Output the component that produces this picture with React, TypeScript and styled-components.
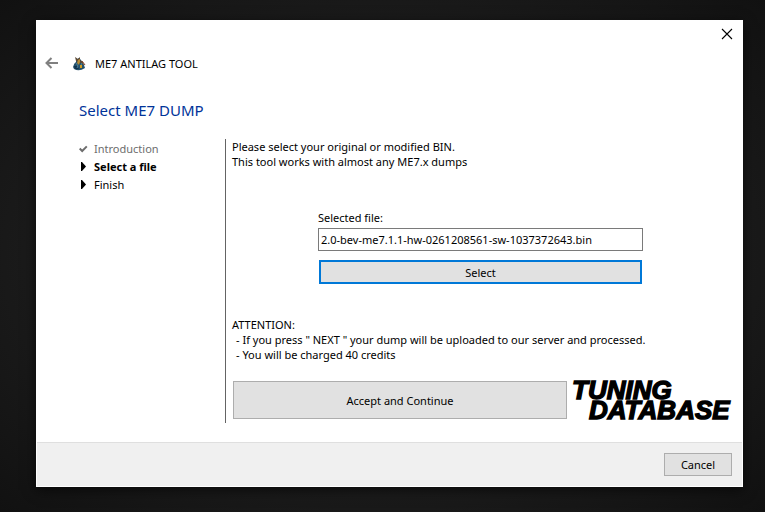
import React, { useState } from "react";
import styled, { createGlobalStyle } from "styled-components";

const GlobalStyle = createGlobalStyle`
  * { box-sizing: border-box; }
  body {
    margin: 0;
    background: #151515;
    color: #000;
    font: 11px/15px "Noto Sans", "Open Sans", sans-serif;
  }
`;

const Desktop = styled.div`
  display: flex;
  min-height: 100vh;
  padding: 20px 22px 25px 36px;
  background: radial-gradient(ellipse at center, #222 0%, #1d1d1d 55%, #111 100%);
`;

const Dialog = styled.main`
  display: flex;
  flex: 1;
  flex-direction: column;
  min-width: 0;
  border: 1px solid #fff;
  background: #fff;
  box-shadow: 0 3px 12px rgba(0, 0, 0, 0.6);
`;

const TitleBar = styled.div`
  display: flex;
  justify-content: flex-end;
  padding: 6px 8px 0;
`;

const IconButton = styled.button`
  display: flex;
  align-items: center;
  justify-content: center;
  width: 14px;
  height: 14px;
  padding: 0;
  border: 0;
  background: transparent;
`;

const Header = styled.header`
  display: flex;
  align-items: center;
  height: 20px;
  margin-top: 12px;
  padding-left: 8px;
`;

const AppIcon = styled.svg`
  width: 14px;
  height: 16px;
  margin: 0 9px 0 13px;
`;

const Title = styled.h1`
  margin: 26px 0 0 42px;
  color: #003399;
  font-size: 15px;
  font-weight: 400;
  line-height: 22px;
`;

const Body = styled.div`
  display: flex;
  flex: 1;
  margin-top: 18px;
  padding: 0 12px 19px 42px;
`;

const Steps = styled.ol`
  flex: 0 0 146px;
  margin: 0;
  padding: 0;
  list-style: none;
`;

const Step = styled.li<{ $state: "done" | "current" | "next" }>`
  display: flex;
  align-items: center;
  gap: 6px;
  height: 18px;
  color: ${({ $state }) => ($state === "done" ? "#6d6d6d" : "#000")};
  font-weight: ${({ $state }) => ($state === "current" ? 700 : 400)};
`;

const Content = styled.section`
  display: flex;
  flex: 1;
  flex-direction: column;
  min-width: 0;
  border-left: 1px solid #646464;
  padding-left: 6px;
`;

const Paragraph = styled.p`
  margin: 0;
`;

const FileForm = styled.div`
  display: flex;
  flex-direction: column;
  margin: 41px 87px 0 86px;
`;

const PathInput = styled.input`
  height: 23px;
  margin-top: 3px;
  padding: 0 2px;
  border: 1px solid #7a7a7a;
  background: #fff;
  color: #000;
  font: inherit;
`;

const Button = styled.button<{ $default?: boolean }>`
  padding: 0 14px;
  border: ${({ $default }) => ($default ? "2px solid #0078d7" : "1px solid #adadad")};
  background: #e1e1e1;
  color: #000;
  font: inherit;
`;

const SelectButton = styled(Button)`
  height: 24px;
  margin: 9px 1px 0;
`;

const Notice = styled.div`
  margin-top: 33px;
`;

const NoticeList = styled.ul`
  margin: 0;
  padding: 0 0 0 4px;
  list-style: none;
`;

const NoticeItem = styled.li`
  &::before {
    content: "- ";
  }
`;

const Actions = styled.div`
  display: flex;
  align-items: flex-start;
  gap: 6px;
  margin-top: 19px;
  padding-left: 1px;
`;

const AcceptButton = styled(Button)`
  flex: 1;
  height: 38px;
`;

const Logo = styled.svg`
  flex: 0 0 157px;
  height: 40px;
  overflow: visible;
  fill: #000;
  stroke: #000;
  stroke-width: 1.4px;
  font-family: "Liberation Sans", Arial, sans-serif;
  font-size: 26px;
  font-style: italic;
  font-weight: 700;
`;

const Footer = styled.footer`
  display: flex;
  align-items: center;
  justify-content: flex-end;
  height: 44px;
  padding: 0 10px;
  border-top: 1px solid #dfdfdf;
  background: #f0f0f0;
`;

const CancelButton = styled(Button)`
  min-width: 68px;
  height: 23px;
`;

const CheckMark = () => (
  <svg width="9" height="9" viewBox="0 0 9 9" aria-hidden="true">
    <path d="M0.7 4.5 L3.2 7 L7.8 2.4" fill="none" stroke="#6d6d6d" strokeWidth="2" />
  </svg>
);

const Arrow = () => (
  <svg width="9" height="9" viewBox="0 0 9 9" aria-hidden="true">
    <path d="M2 0 L3 0 L7 4.5 L3 9 L2 9Z" />
  </svg>
);

export default function App() {
  const [path, setPath] = useState("2.0-bev-me7.1.1-hw-0261208561-sw-1037372643.bin");
  return (
    <>
      <GlobalStyle />
      <Desktop>
        <Dialog>
          <TitleBar>
            <IconButton aria-label="Close">
              <svg width="12" height="12" viewBox="0 0 12 12">
                <path d="M1 1 L11 11 M11 1 L1 11" stroke="#000" strokeWidth="1.1" />
              </svg>
            </IconButton>
          </TitleBar>
          <Header>
            <IconButton aria-label="Back">
              <svg width="14" height="12" viewBox="0 0 14 12">
                <path d="M13 6 H2 M6.5 1 L1.5 6 L6.5 11" fill="none" stroke="#808080" strokeWidth="2" />
              </svg>
            </IconButton>
            <AppIcon viewBox="0 0 14 16" aria-hidden="true">
              <path d="M4 5 L7 3 L9 5 L12 10 L13 13 Q7 17 2 14 L1 12 Q2 8 4 7Z" fill="#24506b" />
              <path d="M2 11 L5 11 L7 14 L3 14Z" fill="#10334f" />
              <path d="M3 2 L6 4 L8 2 L8 5 L11 7 L12 10 L9 8 L6 7 L4 6Z" fill="#5b4935" />
              <path d="M6 5 L8 4 L8 7 L7 10 L5 8Z" fill="#b88b35" />
              <path d="M8 10 H10 V13 H8Z" fill="#d19c22" />
              <path d="M4 8 L6 11 L5 13 M10 8 L9 10" fill="none" stroke="#4e8297" />
              <path d="M10 6 L13 10" stroke="#87452e" />
            </AppIcon>
            <span>ME7 ANTILAG TOOL</span>
          </Header>
          <Title>Select ME7 DUMP</Title>
          <Body>
            <Steps>
              <Step $state="done"><CheckMark />Introduction</Step>
              <Step $state="current"><Arrow />Select a file</Step>
              <Step $state="next"><Arrow />Finish</Step>
            </Steps>
            <Content>
              <Paragraph>Please select your original or modified BIN.</Paragraph>
              <Paragraph>This tool works with almost any ME7.x dumps</Paragraph>
              <FileForm>
                <label htmlFor="file-path">Selected file:</label>
                <PathInput id="file-path" value={path} onChange={(e) => setPath(e.target.value)} />
                <SelectButton $default>Select</SelectButton>
              </FileForm>
              <Notice>
                <Paragraph>ATTENTION:</Paragraph>
                <NoticeList>
                  <NoticeItem>If you press " NEXT " your dump will be uploaded to our server and processed.</NoticeItem>
                  <NoticeItem>You will be charged 40 credits</NoticeItem>
                </NoticeList>
              </Notice>
              <Actions>
                <AcceptButton>Accept and Continue</AcceptButton>
                <Logo viewBox="0 0 157 40" role="img" aria-label="Tuning Database">
                  <text x="-1" y="18">TUNING</text>
                  <text x="16" y="38">DATABASE</text>
                </Logo>
              </Actions>
            </Content>
          </Body>
          <Footer>
            <CancelButton>Cancel</CancelButton>
          </Footer>
        </Dialog>
      </Desktop>
    </>
  );
}
